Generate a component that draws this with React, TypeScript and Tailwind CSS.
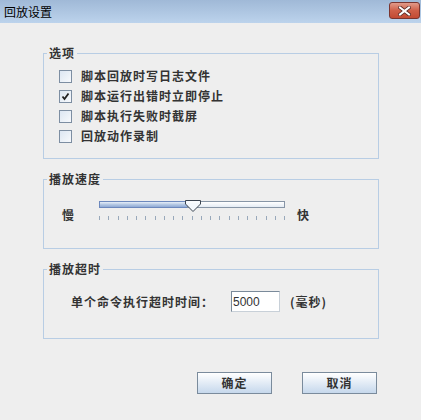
const font = "font-['Noto_Sans_CJK_SC',sans-serif]";
const bold = "text-[12px] font-bold text-[#333] leading-[14px] tracking-[1px]";

function CheckBox({ checked, label }: { checked?: boolean; label: string }) {
  return (
    <div className="flex items-center h-[20px]">
      <div className="w-[13px] h-[13px] border border-[#7d8ea2] bg-gradient-to-br from-[#dce6f2] to-[#f7f9fc] flex items-center justify-center">
        {checked && (
          <svg width="9" height="9" viewBox="0 0 9 9">
            <path d="M1.5 4.5 L3.5 7 L7.5 1.5" fill="none" stroke="#222" strokeWidth="1.8" />
          </svg>
        )}
      </div>
      <span className={"ml-[9px] " + bold}>{label}</span>
    </div>
  );
}

function Group({ title, className, children }: { title: string; className?: string; children: React.ReactNode }) {
  return (
    <fieldset className={"border border-[#b8cde4] " + (className ?? "")}>
      <legend className={"ml-[3px] px-[2px] " + bold}>{title}</legend>
      {children}
    </fieldset>
  );
}

function Button({ label }: { label: string }) {
  return (
    <button className={"w-[75px] h-[22px] border border-[#7a8b9c] bg-gradient-to-b from-[#ffffff] to-[#c6d8ec] " + bold}>
      {label}
    </button>
  );
}

export default function App() {
  const ticks = Array.from({ length: 21 }, (_, i) => i);
  return (
    <div className={"w-[421px] h-[420px] bg-[#eeeeee] flex flex-col " + font}>
      <div className="h-[23px] flex items-center justify-between pl-[4px] pr-[1px] bg-gradient-to-b from-[#a0b9d7] to-[#bcd3ec]">
        <span className="text-[12px] text-black leading-[14px]">回放设置</span>
        <div className="w-[31px] h-[17px] mb-[2px] rounded-[3px] border border-[#7a3530] bg-gradient-to-b from-[#e19a8a] via-[#cf5f48] to-[#c34a33] flex items-center justify-center">
          <svg width="13" height="10" viewBox="0 0 13 10">
            <path d="M2 1.5 L11 8.5 M11 1.5 L2 8.5" stroke="#5a2a26" strokeWidth="3.6" strokeLinecap="square" />
            <path d="M2 1.5 L11 8.5 M11 1.5 L2 8.5" stroke="#fff" strokeWidth="2" strokeLinecap="square" />
          </svg>
        </div>
      </div>

      <div className="flex flex-col pl-[43px] pr-[42px]">
        <Group title="选项" className="mt-[23px] h-[113px]">
          <div className="flex flex-col pl-[15px] pt-[6px]">
            <CheckBox label="脚本回放时写日志文件" />
            <CheckBox checked label="脚本运行出错时立即停止" />
            <CheckBox label="脚本执行失败时截屏" />
            <CheckBox label="回放动作录制" />
          </div>
        </Group>

        <Group title="播放速度" className="mt-[13px] h-[77px]">
          <div className="flex items-start pl-[18px] pt-[14px]">
            <span className={"mt-[8px] " + bold}>慢</span>
            <div className="ml-[24px] w-[186px] flex flex-col">
              <div className="relative h-[12px]">
                <div className="absolute left-0 top-[1px] w-[186px] h-[7px] flex">
                  <div className="w-[88px] h-full border border-r-0 border-[#6c88bd] bg-gradient-to-b from-[#e6eef8] via-[#b4c8e4] to-[#8fa9d4]" />
                  <div className="flex-1 h-full border border-[#8795a6] bg-gradient-to-b from-[#ffffff] to-[#e4ebf3]" />
                </div>
                <svg className="absolute left-[86px] top-0" width="16" height="12" viewBox="0 0 16 12">
                  <path d="M0.5 0.5 H15.5 V4 L8 11.5 L0.5 4 Z" fill="#f4f8fd" stroke="#3b4450" />
                  <path d="M2 2 H14" stroke="#ffffff" />
                </svg>
              </div>
              <div className="mt-[4px] h-[4px] flex justify-between">
                {ticks.map((t) => (
                  <div key={t} className="w-px h-[4px] bg-[#98a8ba]" />
                ))}
              </div>
            </div>
            <span className={"ml-[12px] mt-[8px] " + bold}>快</span>
          </div>
        </Group>

        <Group title="播放超时" className="mt-[13px] h-[77px]">
          <div className="flex items-center pl-[27px] pt-[15px]">
            <span className={bold}>单个命令执行超时时间：</span>
            <div className="ml-[17px] w-[49px] h-[21px] border border-[#7a8a9a] border-b-[#c8d0d8] border-r-[#c8d0d8] bg-white flex items-center pl-[1px]">
              <span className="text-[12px] text-[#333] leading-[14px] font-['Liberation_Sans',sans-serif]">5000</span>
            </div>
            <span className={"ml-[10px] " + bold}>(毫秒)</span>
          </div>
        </Group>
      </div>

      <div className="flex mt-[33px] pl-[197px] gap-[30px]">
        <Button label="确定" />
        <Button label="取消" />
      </div>
    </div>
  );
}
